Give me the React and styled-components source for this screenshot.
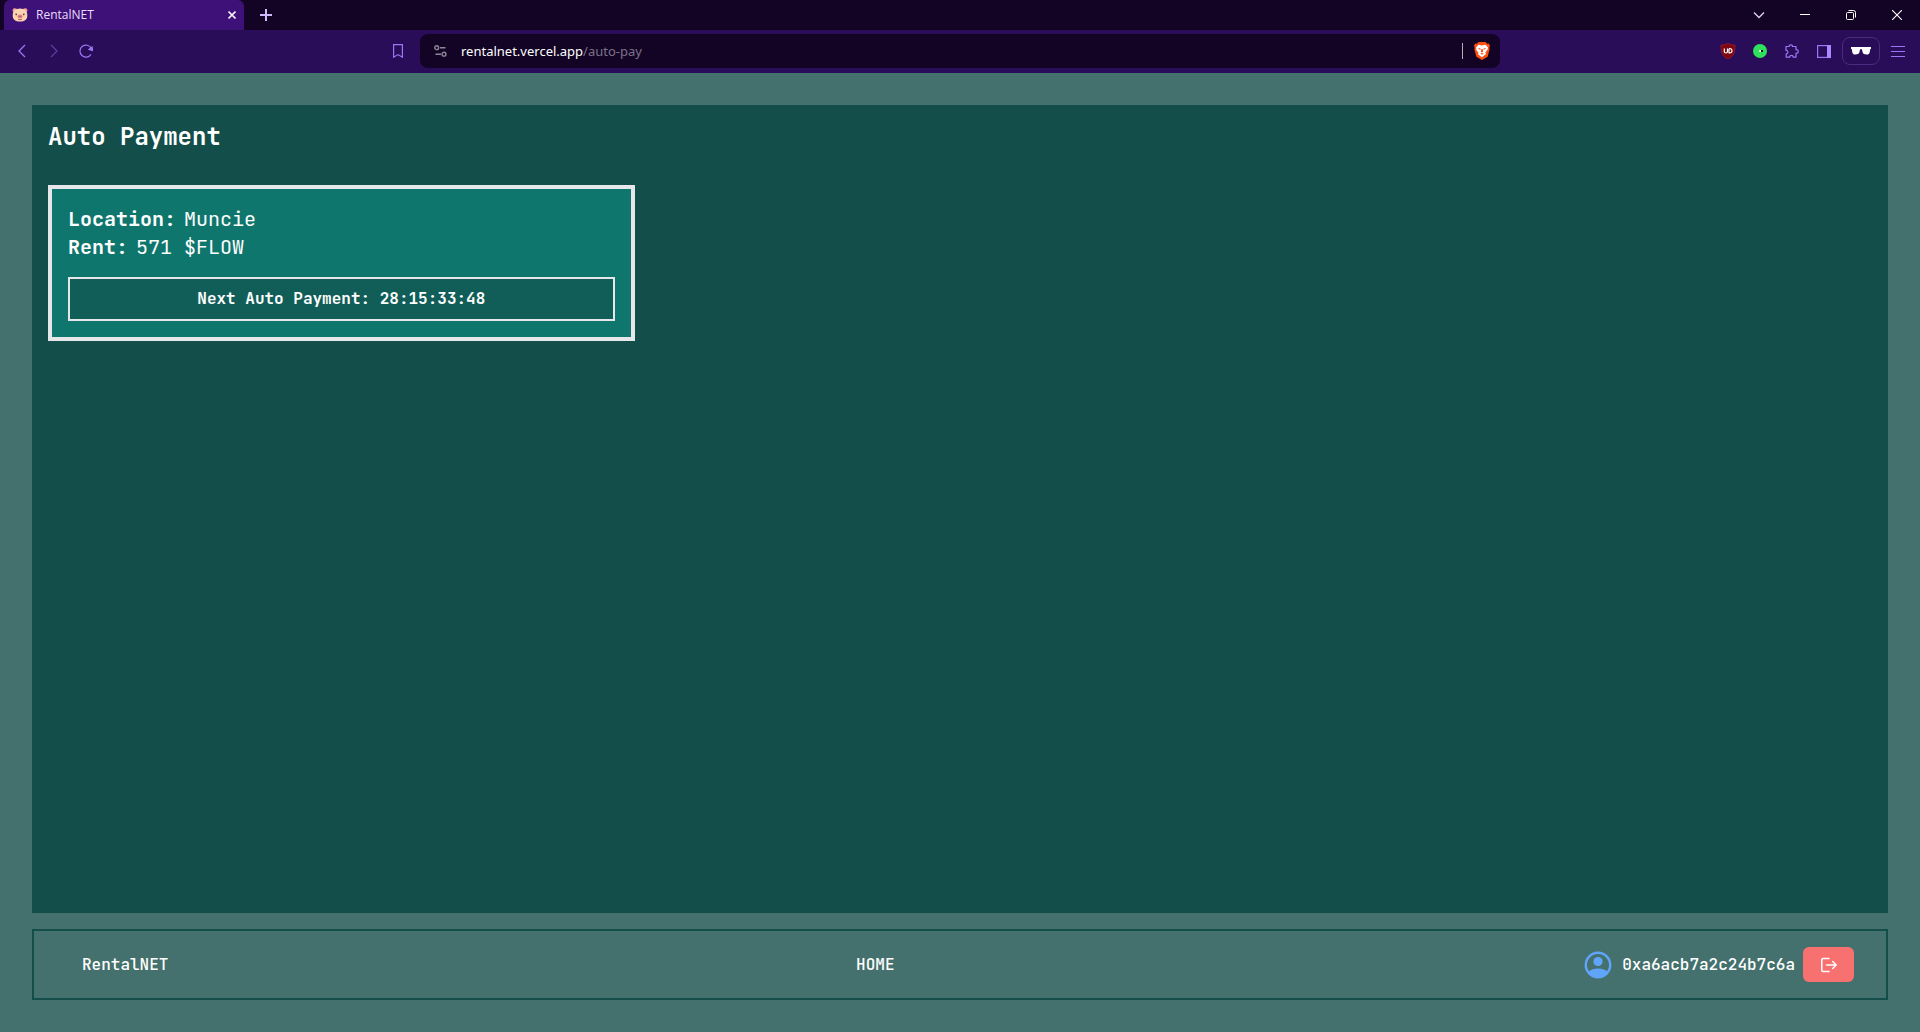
import React from 'react';
import styled, { createGlobalStyle } from 'styled-components';

const GlobalStyle = createGlobalStyle`
	* {
		box-sizing: border-box;
	}

	html,
	body {
		margin: 0;
		padding: 0;
	}

	button {
		margin: 0;
		padding: 0;
		border: none;
		background: none;
		color: inherit;
		font: inherit;
		cursor: pointer;
	}

	svg {
		display: block;
		flex: none;
	}
`;

const Screen = styled.div`
	display: flex;
	flex-direction: column;
	min-height: 100vh;
	font-family: 'Noto Sans', sans-serif;
	color: white;
`;

/* Browser window */

const TabStrip = styled.div`
	display: flex;
	align-items: center;
	height: 30px;
	padding-left: 4px;
	background-color: #130425;
`;

const Tab = styled.div`
	display: flex;
	align-items: center;
	gap: 8px;
	width: 240px;
	height: 30px;
	padding: 0 4px 0 8px;
	border-radius: 6px 6px 0 0;
	background-color: #3e1178;
	color: #e9defc;
	font-family: 'Open Sans', sans-serif;
	font-size: 12px;
	line-height: 16px;

	.title {
		flex: 1;
	}
`;

const TabButton = styled.button`
	display: flex;
	align-items: center;
	justify-content: center;
	width: ${(props) => (props.$wide ? 44 : 16)}px;
	height: 30px;
`;

const WindowControls = styled.div`
	display: flex;
	margin-left: auto;
`;

const WindowButton = styled.button`
	display: flex;
	justify-content: center;
	align-items: center;
	width: 46px;
	height: 28px;
`;

const Toolbar = styled.div`
	display: grid;
	grid-template-columns: 1fr minmax(0, 1080px) 1fr;
	align-items: center;
	gap: 6px;
	height: 43px;
	padding: 0 6px 1px;
	background-color: #2a0d58;
	color: #9d76f5;
`;

const ToolGroup = styled.div`
	display: flex;
	align-items: center;
	justify-content: ${(props) => (props.$end ? 'flex-end' : 'flex-start')};

	.bookmark {
		margin-left: auto;
	}
`;

const ToolButton = styled.button`
	display: flex;
	align-items: center;
	justify-content: center;
	width: 32px;
	height: 32px;
	opacity: ${(props) => (props.disabled ? 0.45 : 1)};
`;

const PrivateButton = styled.button`
	display: flex;
	align-items: center;
	justify-content: center;
	width: 38px;
	height: 28px;
	margin: 0 2px;
	border: 1px solid #4b2a82;
	border-radius: 8px;
`;

const AddressBar = styled.div`
	display: flex;
	align-items: center;
	height: 34px;
	padding: 0 9px 0 14px;
	border-radius: 8px;
	background-color: #130425;
	font-size: 13px;
	line-height: 20px;
	color: #7b728a;

	.url {
		flex: 1;
		margin-left: 14px;
	}

	.host {
		color: white;
	}
`;

const Divider = styled.span`
	width: 1px;
	height: 16px;
	margin-right: 10px;
	background-color: #b5aebd;
`;

/* Page */

const Page = styled.div`
	display: flex;
	flex: 1;
	flex-direction: column;
	gap: 16px;
	padding: 32px;
	background-color: #44716d;
	font-family: 'JetBrains Mono', 'DejaVu Sans Mono', monospace;
	font-size: 16px;
	line-height: 24px;
`;

const Panel = styled.main`
	flex: 1;
	padding: 16px;
	background-color: #134e4a;
`;

const Title = styled.h1`
	margin: 0 0 32px;
	font-size: 24px;
	line-height: 32px;
	font-weight: bold;
`;

const CardGrid = styled.div`
	display: grid;
	grid-template-columns: repeat(3, 1fr);
	gap: 32px;
`;

const CardContainer = styled.section`
	padding: 16px;
	border: 4px solid #e5e7eb;
	background-color: #0f766e;
`;

const Detail = styled.div`
	display: flex;
	gap: 8px;
	font-size: 20px;
	line-height: 28px;

	.label {
		font-weight: bold;
	}
`;

const Countdown = styled.div`
	margin-top: 16px;
	padding: 8px;
	border: 2px solid #e5e7eb;
	background-color: #115e59;
	font-weight: bold;
	text-align: center;
`;

const Footer = styled.footer`
	display: flex;
	align-items: center;
	justify-content: space-between;
	padding: 16px 32px 16px 48px;
	border: 2px solid #134e4a;
	font-weight: 500;
	line-height: 25px;
`;

const FooterLink = styled.a`
	color: white;
	text-decoration: none;
`;

const Account = styled.div`
	display: flex;
	align-items: center;
	gap: 8px;
`;

const LogoutButton = styled.button`
	display: flex;
	align-items: center;
	justify-content: center;
	width: 51px;
	height: 35px;
	border-radius: 6px;
	background-color: #f87171;
`;

function PigIcon() {
	return (
		<svg width="16" height="16" viewBox="0 0 16 16">
			<path d="M.8 2.200C1.500 1 3.500 1 5 2L2 6C.8 5 .3 3.200.8 2.200zM15.200 2.200C14.500 1 12.500 1 11 2l3 4c1.200-1 1.700-2.800 1.200-3.800z" fill="#f4a2a0" />
			<path d="M8 1.600c4.600 0 7.300 2.800 7.300 6.800S12.600 14.600 8 14.600.700 12.400.700 8.400 3.400 1.600 8 1.600z" fill="#fcd3b0" />
			<ellipse cx="8" cy="9.500" rx="2.600" ry="1.900" fill="#e98b88" />
			<ellipse cx="7.100" cy="9.400" rx=".5" ry=".8" fill="#a0484c" />
			<ellipse cx="8.900" cy="9.400" rx=".5" ry=".8" fill="#a0484c" />
			<circle cx="4.200" cy="7.300" r=".9" fill="#4a3a40" />
			<circle cx="11.800" cy="7.300" r=".9" fill="#4a3a40" />
			<path d="M6 12.300q2 .8 4 0" fill="none" stroke="#a0484c" strokeWidth=".8" />
		</svg>
	);
}

function BraveIcon() {
	return (
		<svg width="18" height="20" viewBox="0 0 18 20">
			<path d="M5.500 1h7l1.600 1.700 1.700-.2L17 4.800l-.7 2 .3 1.700-2 7.200L9 19l-5.600-3.300-2-7.200.3-1.700-.7-2 1.200-2.300 1.700.2z" fill="#fb5012" />
			<path d="M5.500 3.800L9 4.400l3.500-.6 2.500 2.600-.5 2.400-2.100 2.700.6 1.400L9 16.200l-4-2.900.6-1.400-2.100-2.700L3 6.400z" fill="#fff" />
			<path d="M4.800 7l2.900.6-.6 1.300zM13.200 7l-2.900.6.6 1.300zM8.400 8h1.200l.6 2.800L9 11.500l-1.200-.7zM7.300 12.600L9 12l1.700.6L9 13.800z" fill="#fb5012" />
		</svg>
	);
}

function ShieldIcon() {
	return (
		<svg width="16" height="16" viewBox="0 0 16 16">
			<path d="M8 0c2 1.400 4.300 2 7 2 .2 7-1 11.500-7 14C2 13.500.8 9 1 2c2.700 0 5-.6 7-2z" fill="#800610" stroke="#a12235" strokeWidth=".6" />
			<path d="M4.300 5.500v3q0 1.500 1.600 1.500t1.600-1.500v-3M9 5.700v4.100q3 .4 3-2T9 5.700" fill="none" stroke="#fff" strokeWidth="1.200" />
		</svg>
	);
}

function GlassesIcon() {
	return (
		<svg width="22" height="10" viewBox="0 0 22 10" fill="#fff">
			<path d="M1 1h20v1.700l-.8.500-.5 3C19.400 8 18.500 8.500 16.500 8.500S13 8 12.600 6.300L12 3.500q-1-.8-2 0l-.6 2.800C9 8 7.500 8.500 5.500 8.500S2.600 8 2.300 6.200l-.5-3L1 2.700z" />
		</svg>
	);
}

function AccountIcon() {
	return (
		<svg width="32" height="32" viewBox="0 0 32 32">
			<circle cx="16" cy="16" r="12.200" fill="none" stroke="#60a5fa" strokeWidth="2.400" />
			<circle cx="16" cy="12.500" r="4.600" fill="#60a5fa" />
			<path d="M6.800 22.500C9 20.700 12 19.600 16 19.600s7 1.100 9.200 2.900l-.8 2.300Q21 28.500 16 28.500t-8.400-3.700z" fill="#60a5fa" />
		</svg>
	);
}

function LogoutIcon() {
	return (
		<svg width="16" height="16" viewBox="0 0 16 16" fill="none" stroke="#fff" strokeWidth="1.500" strokeLinecap="round" strokeLinejoin="round">
			<path d="M8 1.500H2Q.8 1.500.8 2.700v10.600Q.8 14.500 2 14.500h6M5.500 8h9.500M11.700 4.500L15.200 8l-3.500 3.500" />
		</svg>
	);
}

function BrowserTabs() {
	return (
		<TabStrip>
			<Tab>
				<PigIcon />
				<span className="title">RentalNET</span>
				<TabButton aria-label="Close tab">
					<svg width="8" height="8" viewBox="0 0 8 8" stroke="#f1eafd" strokeWidth="1.600">
						<path d="M.5.500l7 7M7.500.500l-7 7" />
					</svg>
				</TabButton>
			</Tab>
			<TabButton $wide aria-label="New tab">
				<svg width="12" height="12" viewBox="0 0 12 12" stroke="#cdb9fb" strokeWidth="2">
					<path d="M6 0v12M0 6h12" />
				</svg>
			</TabButton>
			<WindowControls>
				<WindowButton aria-label="Search tabs">
					<svg width="12" height="8" viewBox="0 0 12 8" fill="none" stroke="#ddd6e8" strokeWidth="1.300">
						<path d="M1 1.500l5 5 5-5" />
					</svg>
				</WindowButton>
				<WindowButton aria-label="Minimize">
					<svg width="10" height="2" viewBox="0 0 10 2">
						<path d="M0 0h10v1H0z" fill="#fff" />
					</svg>
				</WindowButton>
				<WindowButton aria-label="Restore">
					<svg width="10" height="10" viewBox="0 0 10 10" fill="none" stroke="#fff">
						<rect x=".5" y="2.500" width="7" height="7" rx="1" />
						<path d="M2.500.500h5q2 0 2 2v5" />
					</svg>
				</WindowButton>
				<WindowButton aria-label="Close">
					<svg width="10" height="10" viewBox="0 0 10 10" stroke="#fff" strokeWidth="1.100">
						<path d="M0 0l10 10M10 0L0 10" />
					</svg>
				</WindowButton>
			</WindowControls>
		</TabStrip>
	);
}

function BrowserToolbar() {
	return (
		<Toolbar>
			<ToolGroup>
				<ToolButton aria-label="Back">
					<svg width="8" height="14" viewBox="0 0 8 14" fill="none" stroke="currentColor" strokeWidth="1.300">
						<path d="M7 1L1 7l6 6" />
					</svg>
				</ToolButton>
				<ToolButton aria-label="Forward" disabled>
					<svg width="8" height="14" viewBox="0 0 8 14" fill="none" stroke="currentColor" strokeWidth="1.300">
						<path d="M1 1l6 6-6 6" />
					</svg>
				</ToolButton>
				<ToolButton aria-label="Reload">
					<svg width="14" height="14" viewBox="0 0 14 14" fill="none" stroke="currentColor" strokeWidth="1.200">
						<path d="M12.300 4.300A6 6 0 1 0 12 10.400" />
						<path d="M10 5.500l3-2.500.8 3.500z" fill="currentColor" />
					</svg>
				</ToolButton>
				<ToolButton className="bookmark" aria-label="Bookmark">
					<svg width="10" height="14" viewBox="0 0 10 14" fill="none" stroke="currentColor" strokeWidth="1.200">
						<path d="M.6.600h8.800v12.600L5 10.600.6 13.200z" />
					</svg>
				</ToolButton>
			</ToolGroup>
			<AddressBar>
				<svg width="13" height="12" viewBox="0 0 13 12" fill="none" stroke="#8e8799" strokeWidth="1.400">
					<circle cx="2.700" cy="2.700" r="1.900" />
					<path d="M6 2.700h5.500M1.500 9.200H7" />
					<circle cx="10" cy="9.200" r="1.900" />
				</svg>
				<span className="url">
					<span className="host">rentalnet.vercel.app</span>/auto-pay
				</span>
				<Divider />
				<BraveIcon />
			</AddressBar>
			<ToolGroup $end>
				<ToolButton aria-label="Shield extension">
					<ShieldIcon />
				</ToolButton>
				<ToolButton aria-label="Wallet extension">
					<svg width="14" height="14" viewBox="0 0 14 14">
						<circle cx="7" cy="7" r="7" fill="#2fe15a" />
						<rect x="6" y="6" width="4" height="2" rx="1" fill="#fff" />
						<rect x="8" y="6" width="2" height="2" fill="#0c1b10" />
					</svg>
				</ToolButton>
				<ToolButton aria-label="Extensions">
					<svg width="14" height="14" viewBox="0 0 14 14" fill="none" stroke="currentColor" strokeWidth="1.200" strokeLinejoin="round">
						<path d="M1 2.500h3.200C3.900.200 7.800.200 7.500 2.500H11v3.200c3-.5 3 4 0 3.500v4H8.200c.3-2.500-3.700-2.500-3.400 0H1.200V9.800c2.300.2 2.300-3.600-.2-3.400z" />
					</svg>
				</ToolButton>
				<ToolButton aria-label="Side panel">
					<svg width="14" height="13" viewBox="0 0 14 13">
						<rect x=".6" y=".6" width="12.800" height="11.800" fill="none" stroke="currentColor" strokeWidth="1.200" />
						<path d="M10 0h4v13h-4z" fill="#aa88ff" />
					</svg>
				</ToolButton>
				<PrivateButton aria-label="Private window">
					<GlassesIcon />
				</PrivateButton>
				<ToolButton aria-label="Menu">
					<svg width="14" height="11" viewBox="0 0 14 11" stroke="currentColor">
						<path d="M0 .5h14M0 5.500h14M0 10.500h14" />
					</svg>
				</ToolButton>
			</ToolGroup>
		</Toolbar>
	);
}

function PaymentCard(props) {
	return (
		<CardContainer>
			<Detail>
				<span className="label">Location:</span>
				<span>{props.location}</span>
			</Detail>
			<Detail>
				<span className="label">Rent:</span>
				<span>{props.rent} $FLOW</span>
			</Detail>
			<Countdown>Next Auto Payment: {props.next}</Countdown>
		</CardContainer>
	);
}

function App() {
	return (
		<Screen>
			<GlobalStyle />
			<BrowserTabs />
			<BrowserToolbar />
			<Page>
				<Panel>
					<Title>Auto Payment</Title>
					<CardGrid>
						<PaymentCard location="Muncie" rent={571} next="28:15:33:48" />
					</CardGrid>
				</Panel>
				<Footer>
					<FooterLink href="#">RentalNET</FooterLink>
					<FooterLink href="#home">HOME</FooterLink>
					<Account>
						<AccountIcon />
						<span>0xa6acb7a2c24b7c6a</span>
						<LogoutButton aria-label="Log out">
							<LogoutIcon />
						</LogoutButton>
					</Account>
				</Footer>
			</Page>
		</Screen>
	);
}

export default App;
